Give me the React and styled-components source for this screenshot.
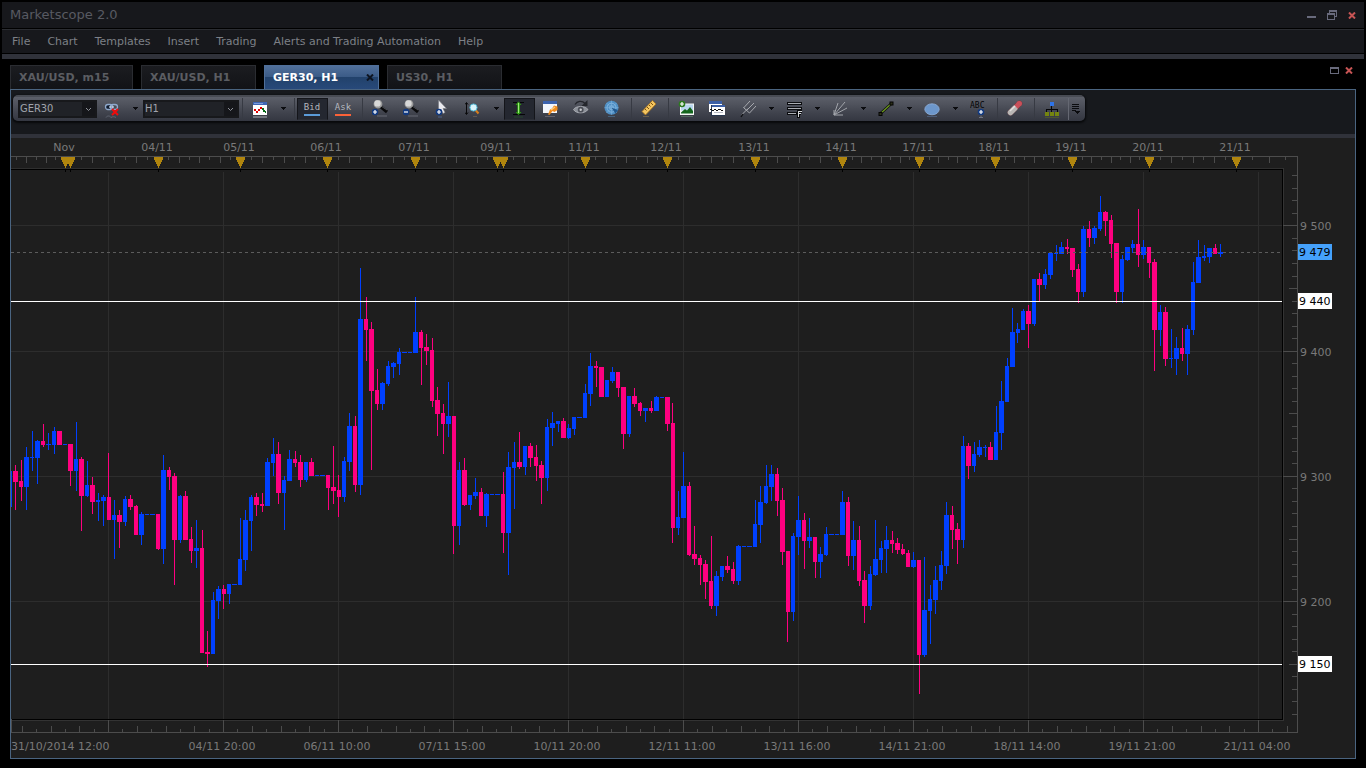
import React, { useState } from "react";
import styled, { createGlobalStyle, css } from "styled-components";

const GlobalStyle = createGlobalStyle`
  * {
    box-sizing: border-box;
  }

  body {
    margin: 0;
    background: #000;
    font-family: "DejaVu Sans", Verdana, sans-serif;
    font-size: 11px;
  }

  button {
    padding: 0;
    border: none;
    background: none;
    font-family: inherit;
    font-size: inherit;
    cursor: pointer;
  }

  svg {
    display: block;
  }
`;

const Window = styled.div`
  display: flex;
  flex-direction: column;
  min-height: 100vh;
  padding: 2px;
  background: #000;
`;

const TitleBar = styled.header`
  display: flex;
  align-items: center;
  justify-content: space-between;
  height: 26px;
  padding: 0 8px;
  background: #17181c;
`;

const Title = styled.h1`
  margin: 0;
  font-size: 13px;
  font-weight: normal;
  line-height: 24px;
  color: #585a62;
`;

const WindowButtons = styled.div`
  display: flex;
  gap: 11px;
`;

const MenuBar = styled.nav`
  display: flex;
  align-items: center;
  gap: 17px;
  height: 24px;
  margin: 1px 0;
  padding: 0 10px;
  border-top: 1px solid #2b2d32;
  background: #17181c;

  a {
    color: #7d8087;
    text-decoration: none;
  }
`;

const Divider = styled.div`
  height: ${(props) => props.$size}px;
  background: #30323a;
`;

const TabBar = styled.div`
  display: flex;
  align-items: flex-end;
  gap: 8px;
  height: 30px;
  padding: 0 8px;
`;

const Tab = styled.div`
  display: flex;
  align-items: center;
  justify-content: space-between;
  width: ${(props) => (props.$wide ? 123 : 115)}px;
  height: 24px;
  padding: 0 4px 0 8px;
  border: 1px solid #2a2c31;
  border-bottom: none;
  background: linear-gradient(#1b1c20, #121317);

  button {
    font-weight: bold;
    color: #5b5d62;
  }

  ${(props) =>
    props.$active &&
    css`
      border-color: #4f6f99;
      background: linear-gradient(#506f99 0, #3a5a86 50%, #22426b 50%, #28497a 100%);

      button {
        color: #fff;
      }
    `}
`;

const PanelButtons = styled.div`
  display: flex;
  align-self: flex-start;
  gap: 6px;
  margin-left: auto;
  padding: 8px 3px 4px 2px;
`;

const Panel = styled.main`
  margin: 0 8px;
  border: 1px solid #4a6480;
  background: #1e1e1e;
`;

const ToolbarZone = styled.div`
  display: flex;
  height: 44px;
  padding: 5px 2px;
  background: #17191d;
`;

const Toolbar = styled.div`
  display: flex;
  align-items: stretch;
  height: 26px;
  padding: 3px 3px 1px 5px;
  border-radius: 5px;
  background: linear-gradient(#484b53 0, #484b53 8%, #5b5e68 9%, #50535d 35%, #3f424c 70%, #343741 100%);
  box-shadow: 0 1px 2px 1px #08090b;
`;

const SelectBox = styled.label`
  position: relative;
  display: flex;
  align-items: center;
  width: ${(props) => props.$width}px;
  height: 18px;
  margin-top: 2px;
  border: 2px solid #17181b;
  background: #202227;

  select {
    width: 100%;
    height: 14px;
    padding: 0;
    border: none;
    outline: none;
    appearance: none;
    background: transparent;
    color: #a0a4ac;
    font-family: "DejaVu Sans Condensed", "DejaVu Sans", sans-serif;
    font-size: 11px;
    line-height: 14px;
  }

  svg {
    position: absolute;
    right: 0;
    top: 0;
    pointer-events: none;
  }
`;

const ToolButton = styled.button`
  display: flex;
  flex-direction: column;
  align-items: center;
  justify-content: center;
  width: 31px;
  padding-right: 1px;
  border: 1px solid transparent;

  ${(props) =>
    props.$pressed &&
    css`
      border-color: #14151a #14151a #2a2d35;
      background: #242730;
    `}
`;

const QuoteLabel = styled.span`
  padding-bottom: 1px;
  border-bottom: 2px solid ${(props) => props.$color};
  font-family: "DejaVu Sans Mono", monospace;
  font-size: 9px;
  line-height: 11px;
  color: #b4b7bd;
`;

const CaretButton = styled.button`
  display: flex;
  align-items: center;
  justify-content: center;
  width: 15px;
  padding-bottom: 2px;
`;

const Separator = styled.span`
  width: 6px;
  background: linear-gradient(90deg, transparent 3px, #373a43 3px, #373a43 4px, transparent 4px);
`;

const OverflowButton = styled.button`
  display: flex;
  align-items: center;
  justify-content: center;
  width: 14px;
  border-left: 1px solid #656872;
`;

const ChartArea = styled.section`
  display: flex;
  height: 620px;
`;

const TimeSvg = styled.svg`
  flex: 1;
  min-width: 0;
  overflow: visible;
`;

const PriceSvg = styled.svg`
  flex: none;
  width: 72px;
  height: 620px;
  overflow: visible;
`;

const AxisText = styled.text`
  fill: ${(props) => props.$color || "#797979"};
  font-family: "DejaVu Sans", Verdana, sans-serif;
  font-size: 11px;
`;

/* ---------- icons ---------- */

const Icon = ({ children, crisp }) => (
  <svg width="16" height="18" viewBox="0 0 16 18" shapeRendering={crisp ? "crispEdges" : undefined} aria-hidden="true">
    {children}
  </svg>
);

const Caret = () => (
  <svg width="5" height="3" viewBox="0 0 5 3" shapeRendering="crispEdges" aria-hidden="true">
    <path d="M0 0h5v1h-1v1h-1v1h-1v-1h-1v-1h-1z" fill="#0b0c0f" />
  </svg>
);

const Badge = ({ x, y, minus, color = "#123a80" }) => (
  <g>
    <circle cx={x} cy={y} r="3.3" fill={color} />
    <path d={minus ? `M${x - 2} ${y}h4` : `M${x - 2} ${y}h4M${x} ${y - 2}v4`} stroke="#fff" strokeWidth="1.2" />
  </g>
);

const LinkIcon = () => (
  <Icon>
    <rect x="1.5" y="4.5" width="7" height="5" rx="2.5" fill="#101b2d" stroke="#8fa9cc" strokeWidth="1.3" />
    <rect x="6.5" y="4.5" width="7" height="5" rx="2.5" fill="none" stroke="#8fa9cc" strokeWidth="1.3" />
    <path d="M5 7h5" stroke="#c9d8ec" strokeWidth="1.2" />
    <path d="M8 9l6 6M14 9l-6 6" stroke="#f00b0b" strokeWidth="2" />
    <path d="M2 17.500c1-2 4-2 5 0M7 17.500c1-1 4-1 5 0" stroke="#6d7280" fill="none" opacity=".7" />
  </Icon>
);

const ChartIcon = () => (
  <Icon crisp>
    <rect x="1" y="2" width="14" height="13" fill="#fff" />
    <rect x="1" y="2" width="14" height="3" fill="#3f66b4" />
    <rect x="2" y="3" width="9" height="1" fill="#7c9bd6" />
    <path d="M2 9h2v2h-2zM4 11h2v2h-2zM6 9h2v2h-2zM8 7h2v2h-2z" fill="#e00000" />
    <path d="M10 8h2v2h-2zM11 10h2v2h-2zM13 11h1v2h-1z" fill="#066a16" />
    <rect x="1" y="16" width="14" height="2" fill="#8b8e96" opacity=".7" />
  </Icon>
);

const ZoomIcon = ({ minus }) => (
  <Icon>
    <path d="M9 7l6 5" stroke="#0a0a0c" strokeWidth="3.2" />
    <path d="M9 6l6 4" stroke="#5c5f66" strokeWidth=".8" />
    <circle cx="6" cy="4" r="4.400" fill="#9b9b9b" />
    <circle cx="5.500" cy="3.400" r="3.200" fill="#d8d8d8" />
    <path d="M5 15h10v2H5z" fill="#777b86" opacity=".35" />
    <Badge x={3} y={12} minus={minus} />
  </Icon>
);

const CursorIcon = () => (
  <Icon>
    <path d="M4.500 0l8 8.500h-3.500l2 4-2 1-2-4-2.500 2z" fill="#e9e9ee" stroke="#77797f" strokeWidth=".6" />
    <Badge x={5} y={12} />
    <path d="M4 16h4v2H4z" fill="#4a5f8a" opacity=".5" />
  </Icon>
);

const VerticalZoomIcon = () => (
  <Icon>
    <path d="M1.500 3v11M0 4.500L1.500 2.500l1.500 2M0 12.500L1.500 14.500l1.500-2" stroke="#08080a" fill="none" />
    <path d="M10.500 10l3 3.500" stroke="#d87e1c" strokeWidth="2" />
    <circle cx="8.500" cy="7.500" r="3.600" fill="#d9f4fb" stroke="#4fb3d0" />
    <path d="M8 16h4v1H8z" fill="#7a6a5c" opacity=".6" />
  </Icon>
);

const FitIcon = () => (
  <Icon>
    <path d="M2 2.500h4M9 2.500h4M2 14.500h12" stroke="#050507" />
    <path d="M7.500 1.500l3 3.500h-1.500v7h1.500l-3 3-3-3h1.800V5H4.500z" fill="#2f9a12" />
    <path d="M7.500 3v10" stroke="#9be87a" />
    <path d="M3 17h9" stroke="#2b5a2a" opacity=".6" />
  </Icon>
);

const EditWindowIcon = () => (
  <Icon>
    <rect x="1" y="1" width="14" height="12" fill="#f2f5fb" />
    <rect x="1" y="1" width="14" height="3" fill="#3c62ad" />
    <path d="M6 14.500l2-5 2-1 2-3 3.500 1v3.500l-3 2-2-1-3 4z" fill="#f08a1c" />
    <path d="M9 10l4-3" stroke="#ffd080" strokeWidth="1.200" />
    <path d="M3 16h10v1H3z" fill="#8a8690" opacity=".5" />
  </Icon>
);

const EyeIcon = () => (
  <Icon>
    <path d="M.5 9.500C3 5.500 12 5.500 15 9.500 12 14 3 14 .5 9.500z" fill="#8c9098" stroke="#b5b8be" strokeWidth=".8" />
    <circle cx="7.700" cy="9.700" r="2.900" fill="#4b4e57" />
    <circle cx="7.700" cy="9.700" r="1.200" fill="#c8cacd" />
    <path d="M2 4.500C4 1 9 0 12 3.500" stroke="#24262c" strokeWidth="1.300" fill="none" />
    <path d="M14.500 0v6h-6z" fill="#24262c" />
  </Icon>
);

const GlobeIcon = () => (
  <Icon>
    <circle cx="7.500" cy="7.700" r="7" fill="#4f8fc4" />
    <circle cx="7.500" cy="7.700" r="4.500" fill="none" stroke="#92c2e6" strokeWidth=".7" />
    <circle cx="7.500" cy="7.700" r="2" fill="none" stroke="#92c2e6" strokeWidth=".7" />
    <path d="M.5 7.700h14M7.500.7v14M2.500 3l10 10M12.500 3l-10 10" stroke="#7db2dc" strokeWidth=".6" />
    <path d="M7.500 7.700L14 10l-2.500 3.500z" fill="#21578c" />
    <path d="M4 16.500h7" stroke="#4f7ba0" opacity=".6" />
  </Icon>
);

const RulerIcon = () => (
  <Icon>
    <path d="M1 11.500L11.500.5 15 4 4.500 15z" fill="#f4c560" stroke="#a8731c" strokeWidth=".8" />
    <path d="M4 9l1.500 1.500M6 7l2 2M8 5l1.500 1.500M10 3l2 2" stroke="#7d5410" />
    <path d="M2 16.500h6" stroke="#8a7650" opacity=".6" />
  </Icon>
);

const PictureIcon = () => (
  <Icon>
    <rect x="2" y="3.500" width="14" height="11.500" fill="#f3f6f4" />
    <rect x="3" y="4.500" width="12" height="6" fill="#b9d6ef" />
    <path d="M3 13.500v-1l4-3.500 2 1.500L12 7l3 4v2.500z" fill="#13661c" />
    <path d="M3 16.500h12" stroke="#5b7a68" opacity=".7" />
    <Badge x={4} y={4} color="#2c7a1f" />
  </Icon>
);

const WindowsIcon = () => (
  <Icon crisp>
    <rect x="0" y="1" width="13" height="11" fill="#fff" />
    <rect x="0" y="1" width="13" height="3" fill="#3c5fa6" />
    <rect x="2" y="5" width="14" height="11" fill="#28374f" />
    <rect x="3" y="5" width="13" height="10" fill="#fff" />
    <rect x="3" y="5" width="13" height="2" fill="#3c5fa6" />
    <path d="M1 9h2v1h-2zM3 10h2v1h-2zM5 9h2v1h-2zM7 10h2v1h-2zM9 9h3v1h-3zM12 10h2v1h-2z" fill="#111" />
    <path d="M5 12.500h9" stroke="#b8bcc6" />
  </Icon>
);

const PitchforkIcon = () => (
  <Icon>
    <path d="M2 14.500L8 8.500M3.500 8L10 1M9.500 13L16 6M3.500 7.500l6 5.500M6.500 10.500L14 3" stroke="#a7a9ae" fill="none" />
    <path d="M1 17l2-3" stroke="#0e0f12" strokeWidth="1.300" />
  </Icon>
);

const FibIcon = () => (
  <Icon crisp>
    <path d="M1 2h15v3H1zM1 7h15v3H1zM1 12h10v3H1z" fill="#0c0d10" />
    <path d="M2 3h13v1H2zM2 8h13v1H2zM2 13h8v1H2z" fill="#a9acb2" />
    <path d="M11 10h5v3h-1v2h-1v3h-3z" fill="#08090b" />
    <path d="M12 11h4v1h-3v1h2v1h-2v3h-1z" fill="#d5d7db" />
  </Icon>
);

const FanIcon = () => (
  <Icon>
    <path d="M2 15L6 3M2 15L13 2M2 15L15 8M2 15v-5M2 15h9" stroke="#a2a5ab" fill="none" />
  </Icon>
);

const LineIcon = () => (
  <Icon>
    <path d="M2 14L14 3" stroke="#0b0c08" strokeWidth="2.600" />
    <path d="M2 14L14 3" stroke="#6f9d1f" strokeWidth="1.200" />
    <rect x="1" y="12.500" width="3" height="3" fill="#2d3019" stroke="#050505" />
    <rect x="12" y="2" width="3" height="3" fill="#2d3019" stroke="#050505" />
  </Icon>
);

const EllipseIcon = () => (
  <Icon>
    <ellipse cx="8" cy="9.300" rx="7.200" ry="5.500" fill="#6d97cb" stroke="#8fb0db" strokeWidth=".8" />
    <path d="M3 16.500h10" stroke="#5a7196" opacity=".6" />
  </Icon>
);

const TextIcon = () => (
  <Icon>
    <text x="0" y="8" fontFamily="DejaVu Sans Mono, monospace" fontSize="8" fill="#050507">
      ABC
    </text>
    <Badge x={11} y={12} />
    <path d="M9 17.500h4M11 15.500v2.500" stroke="#9499a6" opacity=".6" />
  </Icon>
);

const EraserIcon = () => (
  <Icon>
    <path d="M3.500 12.500L12.500 3.500" stroke="#7b3338" strokeWidth="5.600" strokeLinecap="round" />
    <path d="M3.500 12.500L8 8" stroke="#b9b7b5" strokeWidth="5.600" strokeLinecap="round" />
    <path d="M9 7l3.500-3.500" stroke="#c9505a" strokeWidth="5" />
    <path d="M12 3.500h.5" stroke="#c9505a" strokeWidth="5" strokeLinecap="round" />
    <path d="M3 11l5-5" stroke="#e2e0de" strokeWidth="1.400" />
  </Icon>
);

const TreeIcon = () => (
  <Icon crisp>
    <path d="M7 6h1v3h6v3h-1v-2h-5v2h-1v-2H3v2H2V9h5z" fill="#060608" />
    <rect x="6" y="2" width="4" height="4" fill="#2f74e8" />
    <rect x="1" y="12" width="4" height="4" fill="#75850f" />
    <rect x="6" y="12" width="4" height="4" fill="#75850f" />
    <rect x="11" y="12" width="4" height="4" fill="#75850f" />
    <rect x="1" y="17" width="14" height="1" fill="#4b5530" />
  </Icon>
);

const CloseIcon = ({ color = "#c65454" }) => (
  <svg width="8" height="7" viewBox="0 0 8 7" aria-hidden="true">
    <path d="M1 .5l6 6M7 .5l-6 6" stroke={color} strokeWidth="2" />
  </svg>
);

/* ---------- chart data ---------- */

const UP = "#0040ff";
const DOWN = "#ff0080";

// up/down, high, body top, body bottom, low (rows of the price scale)
const candles = `
u471,471,507,507 d465,471,482,510 d460,481,487,501 u447,457,487,510 u431,457,458,471 u440,441,458,484
d424,441,445,447 u433,444,445,450 u427,431,445,454 d431,431,445,445 u444,444,445,445 d444,444,471,486
u422,459,471,491 d457,459,496,531 u461,485,496,497 d477,485,502,514 u493,500,502,521 u495,497,501,526
d453,497,520,520 u500,515,520,559 d510,515,522,548 u496,499,522,526 d495,499,507,510 d505,506,535,535
u512,514,535,545 u514,514,515,515 u514,514,515,515 d514,514,549,550 u455,470,549,564 d467,470,477,490
d473,476,540,585 u495,496,540,543 d491,496,540,540 d527,539,551,563 u520,548,551,568 d530,548,653,653
d631,652,654,667 u592,600,654,654 u586,589,601,619 d585,589,594,609 u584,584,594,604 u584,584,585,585
u518,559,585,585 u510,520,560,571 u495,497,521,551 d493,497,505,516 d493,504,506,512 u458,462,506,506
u438,454,463,476 d442,454,493,504 u476,480,493,530 u450,459,481,481 d451,459,463,467 d455,462,480,487
u462,462,480,482 d458,462,476,476 u475,475,476,476 u475,475,476,476 d475,475,488,510 d446,487,491,504
d475,490,497,517 u457,461,497,502 u413,426,462,471 d416,426,485,492 u268,319,485,495 d297,319,330,361
d322,329,391,470 d369,390,404,410 u382,383,404,410 u361,366,384,386 u362,363,367,378 u348,352,364,375
u352,352,353,353 u352,352,353,353 u297,332,353,353 d330,332,348,385 d334,347,351,365 d338,350,401,407
d387,400,414,436 d404,413,424,454 u382,416,424,437 d416,416,526,554 u462,470,526,545 d458,470,505,506
u495,495,505,510 u478,492,496,499 d488,492,516,516 u493,494,516,527 u494,494,495,495 u494,494,495,495
d472,494,533,553 u452,467,533,575 u442,462,468,509 d432,462,467,469 u446,446,467,475 d443,446,458,467
d445,457,466,481 d461,465,478,504 u419,427,478,491 u412,423,428,446 u421,421,424,432 d418,421,438,438
u424,428,438,439 u417,417,429,435 u417,417,418,418 u384,393,418,418 u353,366,394,406 d361,366,368,387
d367,367,397,397 u380,380,397,397 u367,372,381,383 d372,372,388,397 d387,387,434,449 u396,396,434,437
d388,396,404,407 d402,403,411,416 u408,408,411,422 d401,408,411,413 u396,397,411,411 u397,397,398,398
d397,397,424,431 d403,423,528,543 u491,517,528,535 u452,486,518,518 d482,486,555,556 d526,554,559,565
d555,558,565,585 d560,564,582,599 d536,581,606,609 u571,576,606,616 u566,566,577,581 d556,566,570,573
d562,569,581,584 u545,546,581,585 u546,546,547,547 u546,546,547,547 u500,524,547,547 u486,502,525,543
u465,486,503,504 u465,474,487,501 d468,474,501,516 d488,500,552,565 d551,551,612,642 u533,536,612,621
u496,520,537,555 d513,520,541,569 u518,537,541,548 d537,537,562,578 u547,554,562,578 u527,534,555,556
u534,534,535,535 u534,534,535,535 u491,502,535,535 d497,502,556,566 u521,540,556,570 d526,540,581,586
d571,580,606,623 u566,574,606,610 u520,559,575,576 u541,548,560,573 u526,540,549,573 d531,540,544,553
d538,543,550,554 d544,549,554,555 d550,553,567,567 u552,560,567,568 d560,560,655,694 u557,610,655,657
u585,599,611,644 u566,580,600,614 u551,565,581,590 u502,515,566,574 d506,515,530,549 d523,529,540,564
u436,446,540,548 d443,446,466,479 u442,454,466,472 u440,447,455,457 u445,447,448,457 d442,447,460,460
u406,432,460,460 u381,401,433,450 u358,366,402,402 u308,332,367,367 u323,329,333,343 u309,311,330,330
d305,311,324,348 u279,279,324,326 d273,279,285,301 u269,274,285,289 u253,253,275,279 u245,253,254,261
u242,247,254,254 d239,247,249,254 d248,248,270,277 d264,269,292,303 u226,229,292,297 d221,229,238,247
u226,228,238,244 u196,212,229,231 d211,212,221,236 d215,220,244,258 d243,243,292,303 u255,259,292,303
u247,247,260,261 u240,244,248,253 d209,244,255,267 u240,247,255,259 d247,247,263,278 d259,262,330,371
u305,312,330,346 d307,312,359,366 u329,358,359,368 u337,348,359,375 d328,348,354,361 u325,329,354,375
u262,282,330,335 u240,257,283,283 u245,256,258,261 u248,248,257,263 d244,248,254,254 u244,252,254,257
`
  .trim()
  .split(/\s+/)
  .map((row) => ({ up: row[0] === "u", rows: row.slice(1).split(",").map(Number) }));

const STEP = 5.476;

const dayMarks = [
  [65, "Nov"],
  [70],
  [158, "04/11"],
  [240, "05/11"],
  [327, "06/11"],
  [415, "07/11"],
  [497, "09/11"],
  [503],
  [585, "11/11"],
  [667, "12/11"],
  [755, "13/11"],
  [842, "14/11"],
  [919, "17/11"],
  [995, "18/11"],
  [1072, "19/11"],
  [1149, "20/11"],
  [1236, "21/11"],
];

const timeMarks = [
  [223, "04/11 20:00"],
  [338, "06/11 10:00"],
  [453, "07/11 15:00"],
  [568, "10/11 20:00"],
  [683, "12/11 11:00"],
  [798, "13/11 16:00"],
  [913, "14/11 21:00"],
  [1028, "18/11 14:00"],
  [1143, "19/11 21:00"],
  [1258, "21/11 04:00"],
];

const priceY = (price) => Math.round(225.4 + (9500 - price) * 1.2525);

// every day is split into eight parts, each second tick is long
const topTicks = [];
const dayEdges = [-13, ...dayMarks.map(([x]) => x), 1366];
dayEdges.slice(0, -1).forEach((from, i) => {
  const to = dayEdges[i + 1];
  if (to - from < 10) return;
  for (let k = 1; k < 8; k++) {
    const x = Math.round(from + ((to - from) * k) / 8);
    if (x > 12 && x < 1290) topTicks.push([x, k % 2 === 0]);
  }
});

const bottomTicks = [];
for (let k = -6; k <= 82; k++) {
  const x = Math.round(108 + k * 14.375);
  if (x > 12) bottomTicks.push([x, k % 8 === 0 ? 12 : k % 2 === 0 ? 6 : 3]);
}

const priceTicks = [];
for (let price = 9540; price >= 9110; price -= 10) {
  priceTicks.push([priceY(price), price % 100 === 0 ? 14 : price % 50 === 0 ? 8 : 5]);
}

const TimeChart = () => (
  <TimeSvg height="620" role="img" aria-label="GER30, H1">
    <g transform="translate(-11 -138)" shapeRendering="crispEdges">
      <rect x="11" y="156" width="100%" height="1" fill="#4c4c4c" />
      {topTicks.map(([x, long]) => (
        <rect key={x} x={x} y="157" width="1" height={long ? 6 : 3} fill="#4c4c4c" />
      ))}
      <rect x="11" y="168" width="100%" height="1" fill="#2f2f2f" />
      <rect x="11" y="169" width="100%" height="1" fill="#000" />
      <rect x="11" y="719" width="100%" height="1" fill="#000" />
      <rect x="11" y="720" width="100%" height="1" fill="#333" />
      <rect x="11" y="732" width="100%" height="1" fill="#4c4c4c" />
      <rect x="11" y="719" width="1" height="13" fill="#4c4c4c" />
      {bottomTicks.map(([x, size]) => (
        <rect key={x} x={x} y={732 - size} width="1" height={size} fill="#4c4c4c" />
      ))}
      {[108, ...timeMarks.map(([x]) => x)].map((x) => (
        <rect key={x} x={x} y="172" width="1" height="547" fill="#2d2d2d" />
      ))}
      {[9500, 9400, 9300, 9200].map((price) => (
        <rect key={price} x="11" y={priceY(price)} width="100%" height="1" fill="#2d2d2d" />
      ))}
      {candles.map(({ up, rows: [high, top, bottom, low] }, i) => {
        const left = Math.round(7.95 + i * STEP);
        const right = Math.round(7.95 + (i + 1) * STEP) - 1;
        const x = Math.max(left, 11);
        return (
          <g key={i} fill={up ? UP : DOWN}>
            {i > 0 && <rect x={Math.round(9.9 + i * STEP)} y={high} width="1" height={low - high} />}
            <rect x={x} y={top} width={right - x} height={bottom - top} />
          </g>
        );
      })}
      <svg x="11" y="252" width="100%" height="1">
        <line x1="0" y1="0.5" x2="100%" y2="0.5" stroke="#5c5c5c" strokeDasharray="3 3" />
      </svg>
      <rect x="11" y="301" width="100%" height="1" fill="#fff" />
      <rect x="11" y="664" width="100%" height="1" fill="#fff" />
      {dayMarks.map(([x]) => (
        <g key={x}>
          <path d={`M${x - 4} 157h9v3h-1v2h-1v2h-1v2h-1v2h-1v-2h-1v-2h-1v-2h-1v-2h-1z`} fill="#b0850e" />
          <rect x={x} y="170" width="1" height="2" fill="#000" />
        </g>
      ))}
    </g>
    <g transform="translate(-11 -138)" textAnchor="middle">
      {dayMarks
        .filter(([, label]) => label)
        .map(([x, label]) => (
          <AxisText key={x} x={x - 1} y="151">
            {label}
          </AxisText>
        ))}
      {timeMarks.map(([x, label]) => (
        <AxisText key={x} x={x - 1} y="750">
          {label}
        </AxisText>
      ))}
      <AxisText x="11" y="750" textAnchor="start">
        31/10/2014 12:00
      </AxisText>
    </g>
  </TimeSvg>
);

const PriceAxis = () => (
  <PriceSvg role="img" aria-label="Price scale">
    <g transform="translate(0 -138)" shapeRendering="crispEdges">
      <path d="M0 156h15v577h-15v-1h14v-575h-14z" fill="#4c4c4c" />
      <rect x="-1" y="169" width="1" height="551" fill="#000" />
      <rect x="0" y="168" width="1" height="553" fill="#333" />
      {priceTicks.map(([y, size]) => (
        <rect key={y} x={14 - size} y={y} width={size} height="1" fill="#4c4c4c" />
      ))}
      <rect x="15" y="244" width="34" height="16" fill="#45a1fb" />
      <rect x="15" y="293" width="34" height="16" fill="#fff" />
      <rect x="15" y="656" width="34" height="16" fill="#fff" />
    </g>
    <g transform="translate(0 -138)">
      <AxisText x="17" y="230">9 500</AxisText>
      <AxisText x="17" y="356">9 400</AxisText>
      <AxisText x="17" y="481">9 300</AxisText>
      <AxisText x="17" y="606">9 200</AxisText>
      <AxisText x="16" y="256" $color="#000">9 479</AxisText>
      <AxisText x="16" y="305" $color="#000">9 440</AxisText>
      <AxisText x="16" y="668" $color="#000">9 150</AxisText>
    </g>
  </PriceSvg>
);

const Select = ({ label, width, value, options, onChange }) => (
  <SelectBox $width={width}>
    <select aria-label={label} value={value} onChange={(e) => onChange(e.target.value)}>
      {options.map((option) => (
        <option key={option}>{option}</option>
      ))}
    </select>
    <svg width="13" height="14" viewBox="0 0 13 14" aria-hidden="true">
      <rect width="13" height="14" fill="#15161a" />
      <path d="M4 6l2.500 2.500L9 6" stroke="#8f929a" fill="none" />
    </svg>
  </SelectBox>
);

const Tool = ({ label, icon, pressed, menu }) => (
  <>
    <ToolButton aria-label={label} title={label} $pressed={pressed}>
      {icon}
    </ToolButton>
    {menu && (
      <CaretButton aria-label={`${label} options`}>
        <Caret />
      </CaretButton>
    )}
  </>
);

const menus = ["File", "Chart", "Templates", "Insert", "Trading", "Alerts and Trading Automation", "Help"];
const tabs = ["XAU/USD, m15", "XAU/USD, H1", "GER30, H1", "US30, H1"];

const App = () => {
  const [active, setActive] = useState("GER30, H1");
  const [symbol, setSymbol] = useState("GER30");
  const [period, setPeriod] = useState("H1");
  const [side, setSide] = useState("Bid");

  return (
    <Window>
      <GlobalStyle />
      <TitleBar>
        <Title>Marketscope 2.0</Title>
        <WindowButtons>
          <button aria-label="Minimize">
            <svg width="9" height="10" viewBox="0 0 9 10">
              <rect y="6" width="9" height="2" fill="#686a7c" />
            </svg>
          </button>
          <button aria-label="Restore">
            <svg width="10" height="10" viewBox="0 0 10 10" shapeRendering="crispEdges">
              <path d="M2 3V0h8v7H8V6h1V2H3v1z" fill="#686a7c" />
              <path d="M0 3h8v7H0zM1 5v4h6V5z" fill="#686a7c" fillRule="evenodd" />
            </svg>
          </button>
          <button aria-label="Close">
            <CloseIcon />
          </button>
        </WindowButtons>
      </TitleBar>
      <MenuBar>
        {menus.map((menu) => (
          <a key={menu} href="#menu">
            {menu}
          </a>
        ))}
      </MenuBar>
      <Divider $size={5} />
      <TabBar>
        {tabs.map((tab, i) => (
          <Tab key={tab} $active={tab === active} $wide={i === 0}>
            <button onClick={() => setActive(tab)}>{tab}</button>
            {tab === active && (
              <button aria-label="Close tab">
                <CloseIcon color="#0d1420" />
              </button>
            )}
          </Tab>
        ))}
        <PanelButtons>
          <button aria-label="Maximize chart">
            <svg width="9" height="7" viewBox="0 0 9 7" shapeRendering="crispEdges">
              <path d="M0 0h9v7H0zM1 2v4h7V2z" fill="#686a7c" fillRule="evenodd" />
            </svg>
          </button>
          <button aria-label="Close chart">
            <CloseIcon />
          </button>
        </PanelButtons>
      </TabBar>
      <Panel>
        <ToolbarZone>
          <Toolbar>
            <Select label="Symbol" width={79} value={symbol} options={["GER30", "US30", "XAU/USD"]} onChange={setSymbol} />
            <Tool label="Link" icon={<LinkIcon />} menu />
            <Select label="Period" width={96} value={period} options={["m15", "H1"]} onChange={setPeriod} />
            <Separator />
            <Tool label="Chart type" icon={<ChartIcon />} menu />
            <Separator />
            <ToolButton $pressed={side === "Bid"} onClick={() => setSide("Bid")}>
              <QuoteLabel $color="#5b9bd8">Bid</QuoteLabel>
            </ToolButton>
            <ToolButton $pressed={side === "Ask"} onClick={() => setSide("Ask")}>
              <QuoteLabel $color="#fb6238">Ask</QuoteLabel>
            </ToolButton>
            <Separator />
            <Tool label="Zoom in" icon={<ZoomIcon />} />
            <Tool label="Zoom out" icon={<ZoomIcon minus />} />
            <Tool label="Cursor" icon={<CursorIcon />} />
            <Tool label="Vertical zoom" icon={<VerticalZoomIcon />} menu />
            <Tool label="Auto scale" icon={<FitIcon />} pressed />
            <Tool label="Properties" icon={<EditWindowIcon />} />
            <Tool label="Show or hide" icon={<EyeIcon />} />
            <Tool label="Radar" icon={<GlobeIcon />} />
            <Separator />
            <Tool label="Measure" icon={<RulerIcon />} />
            <Separator />
            <Tool label="Add indicator" icon={<PictureIcon />} />
            <Tool label="Add window" icon={<WindowsIcon />} />
            <Tool label="Pitchfork" icon={<PitchforkIcon />} menu />
            <Tool label="Fibonacci" icon={<FibIcon />} menu />
            <Tool label="Fan" icon={<FanIcon />} menu />
            <Tool label="Line" icon={<LineIcon />} menu />
            <Tool label="Ellipse" icon={<EllipseIcon />} menu />
            <Tool label="Text" icon={<TextIcon />} />
            <Separator />
            <Tool label="Eraser" icon={<EraserIcon />} />
            <Separator />
            <Tool label="Objects" icon={<TreeIcon />} />
            <OverflowButton aria-label="More tools">
              <svg width="10" height="12" viewBox="0 0 10 12" shapeRendering="crispEdges">
                <path d="M1 1h7v1H1zM1 3h7v1H1zM1 5h7v1H1zM1 7h4v1H1z" fill="#0b0c0f" />
                <path d="M4 8h5v1h-1v1h-1v1h-1v-1h-1v-1h-1z" fill="#0b0c0f" />
              </svg>
            </OverflowButton>
          </Toolbar>
        </ToolbarZone>
        <Divider $size={4} />
        <ChartArea>
          <TimeChart />
          <PriceAxis />
        </ChartArea>
      </Panel>
    </Window>
  );
};

export default App;
